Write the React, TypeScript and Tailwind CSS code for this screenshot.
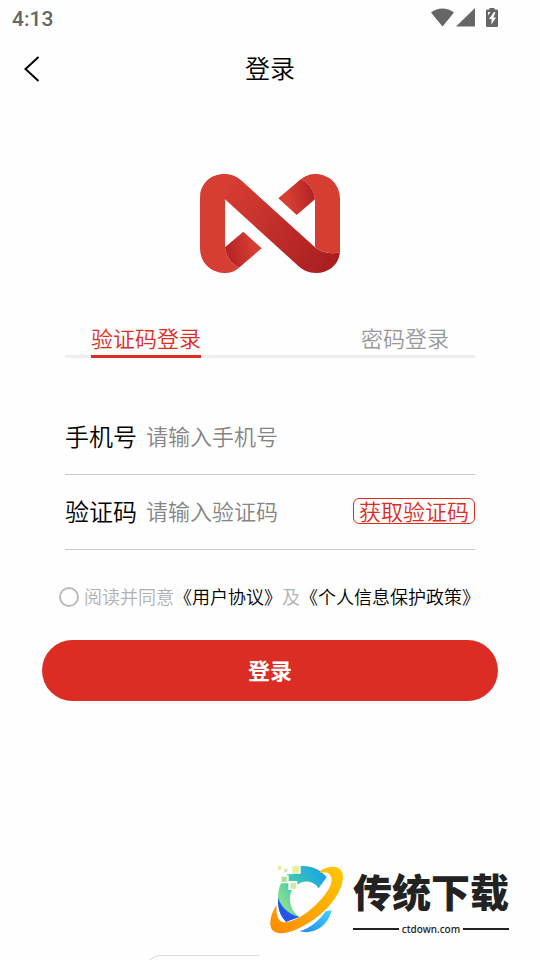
import React, { useState } from 'react';

const tabs = [
  { id: 'code', label: '验证码登录' },
  { id: 'password', label: '密码登录' },
];

const StatusBar = () => (
  <div className="flex h-9 items-center justify-between pl-3 pr-[42px] text-[#666]">
    <span className="pt-0.5 font-[Roboto] text-[21px] font-medium leading-6">4:13</span>
    <svg width="67" height="20" viewBox="0 0 67 20" fill="currentColor" aria-hidden="true">
      <path d="M0 4.500C7-1 16-1 23 4.500L11.500 18.500Z" />
      <path d="M25 18.500 44 0v18.500Z" />
      <path
        fillRule="evenodd"
        d="M58.500 0h5v1.500H66a1 1 0 0 1 1 1V18a1 1 0 0 1-1 1H56a1 1 0 0 1-1-1V2.500a1 1 0 0 1 1-1h2.500ZM57 4v3.500l2.500-3.500Zm6 0-5 7h2.500v5.500L65 9.500h-2.500l2-5.500Z"
      />
    </svg>
  </div>
);

const Header = () => (
  <header className="grid h-16 grid-cols-[64px_1fr_64px] items-center">
    <button type="button" aria-label="返回" className="flex h-full items-center pl-6 pt-0.5">
      <svg width="16" height="26" viewBox="0 0 16 26" fill="none" stroke="#000" strokeWidth="2">
        <path d="M14.500 1 1.500 13 14.500 25" />
      </svg>
    </button>
    <h1 className="pb-0.5 text-center text-[25px] leading-8">登录</h1>
  </header>
);

const Logo = () => (
  <svg className="mx-auto mt-[74px]" width="140" height="99" viewBox="30 27 420 297" aria-hidden="true">
    <defs>
      <linearGradient id="band" gradientUnits="userSpaceOnUse" x1="60" y1="60" x2="420" y2="310">
        <stop offset="0.1" stopColor="#d63d33" />
        <stop offset="1" stopColor="#aa1e20" />
      </linearGradient>
      <linearGradient id="foldLeft" gradientUnits="userSpaceOnUse" x1="112" y1="265" x2="190" y2="245">
        <stop offset="0" stopColor="#b42424" />
        <stop offset="1" stopColor="#d63d33" />
      </linearGradient>
      <linearGradient id="foldRight" gradientUnits="userSpaceOnUse" x1="370" y1="85" x2="295" y2="100">
        <stop offset="0" stopColor="#b42424" />
        <stop offset="1" stopColor="#d63d33" />
      </linearGradient>
    </defs>
    <path fill="#d63d33" d="M30 100C30 85 34 72 40 62H105V247C107 270 120 295 147 308C135 318 122 324 105 324C62 324 30 292 30 250Z" />
    <path
      fill="url(#band)"
      d="M30 100C30 55 62 27 103 27C125 27 140 34 155 47L375 247C395 264 425 268 450 262C446 300 415 324 378 324C355 324 338 315 325 303L105 103C85 86 55 80 30 86Z"
    />
    <path fill="url(#foldLeft)" d="M105 247L160 200L215 250L147 308C120 295 107 270 105 247Z" />
    <path fill="#d63d33" d="M450 262C425 268 395 264 375 247V103C373 80 360 55 333 42C345 33 358 27 375 27C418 27 450 59 450 101Z" />
    <path fill="url(#foldRight)" d="M375 103L320 150L265 100L333 42C360 55 373 80 375 103Z" />
  </svg>
);

const Field = ({
  id,
  label,
  placeholder,
  children,
}: {
  id: string;
  label: string;
  placeholder: string;
  children?: React.ReactNode;
}) => (
  <div className="flex h-[75px] items-center border-b border-[#c8c8c8] pb-0.5">
    <label htmlFor={id} className="shrink-0 text-[24px] leading-8">
      {label}
    </label>
    <input
      id={id}
      type="text"
      placeholder={placeholder}
      className="ml-[9px] h-8 min-w-0 flex-1 pb-0.5 text-[22px] outline-none placeholder:text-[#858585]"
    />
    {children}
  </div>
);

const SiteMark = () => (
  <div className="ml-auto mr-[31px] flex items-start gap-[10px]">
    <svg width="73" height="72" viewBox="30 25 219 216" aria-hidden="true">
      <defs>
        <linearGradient id="arc" gradientUnits="userSpaceOnUse" x1="60" y1="140" x2="190" y2="60">
          <stop offset="0" stopColor="#8be08c" />
          <stop offset="0.45" stopColor="#3cc5b4" />
          <stop offset="1" stopColor="#1ba3e8" />
        </linearGradient>
        <linearGradient id="ring" x1="0" y1="1" x2="1" y2="0">
          <stop offset="0" stopColor="#ff8a00" />
          <stop offset="1" stopColor="#ffc803" />
        </linearGradient>
        <linearGradient id="tail" x1="0" y1="1" x2="1" y2="0">
          <stop offset="0" stopColor="#2488f0" />
          <stop offset="1" stopColor="#42d2ff" />
        </linearGradient>
      </defs>
      <path fill="url(#arc)" d="M112 35C150 30 180 42 200 68L176 101C164 83 142 76 122 84C100 92 88 112 90 136C91 157 102 175 118 187C85 190 52 165 54 120C56 90 76 55 112 35Z" />
      <path fill="#1fb0df" d="M54 125C60 150 80 178 118 187L78 201C60 182 52 155 54 125Z" />
      <path fill="#2455e8" d="M54 132C64 160 90 182 118 187L78 201C60 184 53 160 54 132Z" />
      <path fill="url(#ring)" d="M183 47C215 29 248 33 249 66C249 115 195 180 128 215C85 240 35 247 31 210C30 190 38 168 50 152C48 178 52 198 68 202C90 207 130 186 163 155C197 122 222 88 213 66C208 53 196 50 178 55Z" />
      <path fill="url(#tail)" d="M118 230C150 222 177 198 197 170L215 167C205 208 170 242 118 230Z" />
      <path fill="#fff" d="M76 33h21v26H76ZM94 30h28v27H94ZM61 62h25v24H61ZM85 79h27v27H85Z" />
      <path fill="#e3ef9b" d="M54 33h10v12H54ZM97 34h20v20H97Z" />
      <path fill="#cfeaa0" d="M73 42h9v11h-9ZM92 84h16v18H92Z" />
      <path fill="#a9e092" d="M65 66h15v16H65Z" />
    </svg>
    <div className="text-[#222]">
      <p className="mb-1 text-[39px] font-black leading-[54px]">传统下载</p>
      <div className="flex items-center gap-[3px]">
        <span className="h-[2px] flex-1 bg-[#222]" />
        <span className="font-['Noto_Sans'] text-[10px] font-medium leading-4">ctdown.com</span>
        <span className="h-[2px] flex-1 bg-[#222]" />
      </div>
    </div>
  </div>
);

const App = () => {
  const [active, setActive] = useState('code');

  return (
    <div className="flex min-h-screen flex-col bg-[#fefefe] font-['Noto_Sans_CJK_SC',sans-serif] font-[350] text-black">
      <StatusBar />
      <Header />
      <Logo />

      <form className="mt-12" onSubmit={(e) => e.preventDefault()}>
        <div className="mx-[65px]">
          <div className="flex justify-between border-b-[3px] border-[#eee] px-[26px]">
            {tabs.map((tab) => (
              <button
                key={tab.id}
                type="button"
                onClick={() => setActive(tab.id)}
                className={
                  active === tab.id
                    ? '-mb-[3px] border-b-[3px] border-[#dc2d24] pb-0.5 text-[22px] leading-8 text-[#dc2d24]'
                    : 'pb-0.5 text-[22px] leading-8 text-[#999]'
                }
              >
                {tab.label}
              </button>
            ))}
          </div>

          <div className="mt-[42px]">
            <Field id="phone" label="手机号" placeholder="请输入手机号" />
            <Field id="captcha" label="验证码" placeholder="请输入验证码">
              <button
                type="button"
                className="h-[26px] shrink-0 rounded-md border border-[#dc2d24] px-[5px] pb-0.5 text-[22px] leading-[22px] text-[#dc2d24]"
              >
                获取验证码
              </button>
            </Field>
          </div>
        </div>

        <div className="mx-[59px] mt-[34px] flex items-center gap-[5px] text-[18px] leading-6 text-[#b0b0b0]">
          <input
            id="agree"
            type="checkbox"
            className="size-5 shrink-0 appearance-none rounded-full border-2 border-[#bbb] checked:bg-[#dc2d24]"
          />
          <label htmlFor="agree" className="whitespace-nowrap pb-0.5">
            阅读并同意
            <a href="#terms" className="text-black">《用户协议》</a>
            及
            <a href="#privacy" className="text-black">《个人信息保护政策》</a>
          </label>
        </div>

        <div className="mx-[42px] mt-[30px]">
          <button type="submit" className="h-[61px] w-full rounded-full bg-[#dc2d24] pb-0.5 text-[22px] font-bold text-white">
            登录
          </button>
        </div>
      </form>

      <footer className="mt-auto flex flex-col pt-10">
        <SiteMark />
        <div className="ml-[145px] mt-[18px] h-[5px] w-[115px] overflow-hidden">
          <div className="h-4 rounded-tl-2xl border-l border-t border-[#ddd]" />
        </div>
      </footer>
    </div>
  );
};

export default App;
